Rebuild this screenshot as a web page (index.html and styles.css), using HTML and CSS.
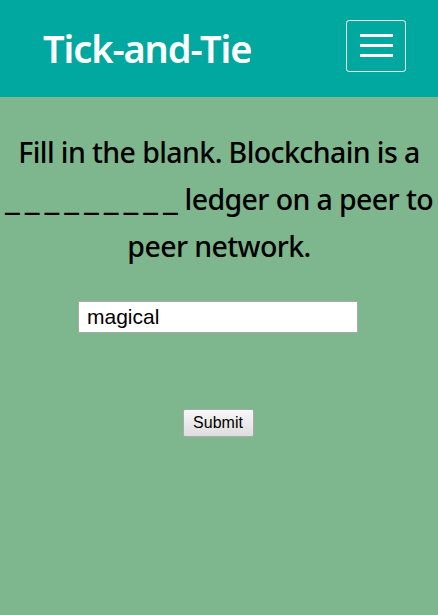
FILE: index.html
```html
<!DOCTYPE html>
<html>
<head>
<meta charset="utf-8">
<link rel="stylesheet" href="styles.css">
</head>
<body>
<header class="topbar">
  <div class="brand">Tick-and-Tie</div>
  <button class="menu-btn" type="button" aria-label="Menu">
    <span class="bar"></span><span class="bar"></span><span class="bar"></span>
  </button>
</header>
<main class="quiz">
  <h2 class="question">Fill in the blank. Blockchain is a <span class="blank">_________</span> ledger on a peer to peer network.</h2>
  <form class="answer-form">
    <input class="answer" type="text" value="magical">
    <button class="submit" type="button">Submit</button>
  </form>
</main>
</body>
</html>
```
FILE: styles.css
```css
html, body {
  margin: 0;
  padding: 0;
  height: 100%;
}
body {
  background: #7eb68e;
  font-family: "Noto Sans", sans-serif;
}
.topbar {
  height: 97px;
  background: #00a8a0;
  display: flex;
  align-items: center;
  justify-content: space-between;
  padding: 0 32px 0 43px;
  box-sizing: border-box;
}
.brand {
  color: #fff;
  font-size: 38px;
  font-weight: 600;
  letter-spacing: -1.1px;
  line-height: 1;
  margin-top: -2px;
}
.menu-btn {
  width: 60px;
  height: 52px;
  margin-top: -5px;
  background: transparent;
  border: 1px solid #e8f7f6;
  border-radius: 3px;
  display: flex;
  flex-direction: column;
  align-items: center;
  justify-content: center;
  gap: 7px;
  padding: 0 0 2px;
  box-sizing: border-box;
}
.bar {
  display: block;
  width: 33px;
  height: 3px;
  background: #fff;
}
.quiz {
  text-align: center;
}
.question {
  margin: 0;
  padding: 32px 0 0;
  font-weight: 500;
  font-size: 28.5px;
  line-height: 47px;
  color: #000;
  letter-spacing: -0.6px;
}
.blank {
  font-size: 34px;
  line-height: 1;
  letter-spacing: 5px;
  margin-right: -5px;
}
.answer-form {
  display: flex;
  flex-direction: column;
  align-items: center;
  padding-right: 2px;
}
.answer {
  margin-top: 31px;
  width: 280px;
  height: 32px;
  box-sizing: border-box;
  border: 1px solid #a9a9a9;
  background: #fff;
  font-family: "Liberation Sans", Arial, sans-serif;
  font-size: 21px;
  padding: 0 8px;
  color: #000;
}
.submit {
  margin-top: 76px;
  width: 71px;
  height: 28px;
  box-sizing: border-box;
  border: 1px solid #a9a9a9;
  border-radius: 2px;
  background: linear-gradient(#f8f8f8, #dddddd);
  font-family: "Liberation Sans", Arial, sans-serif;
  font-size: 16px;
  color: #000;
  padding: 0;
}
```
